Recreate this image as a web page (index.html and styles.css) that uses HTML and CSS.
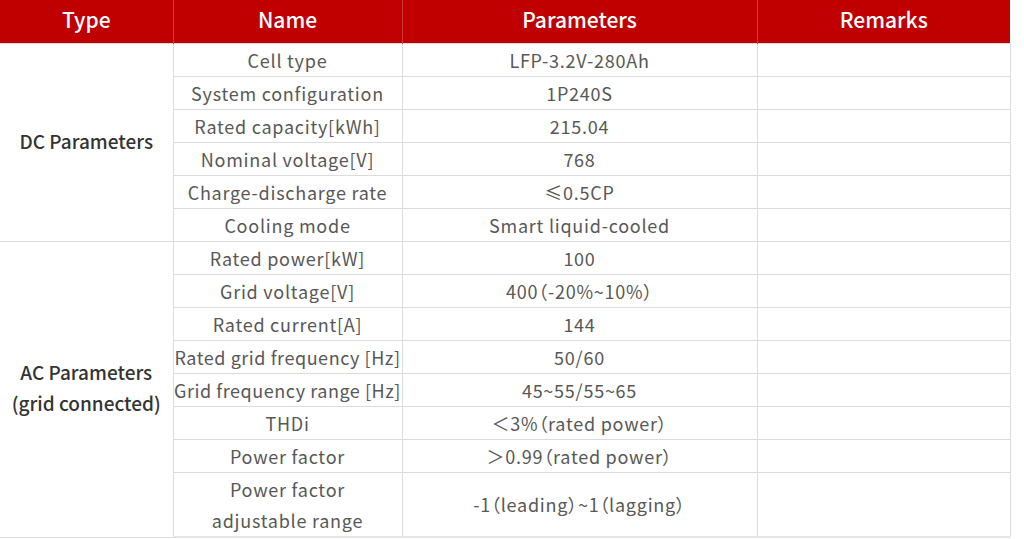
FILE: index.html
```html
<!DOCTYPE html>
<html>
<head>
<meta charset="utf-8">
<link rel="stylesheet" href="styles.css">
</head>
<body>
<table class="spec">
  <colgroup>
    <col class="c1"><col class="c2"><col class="c3"><col class="c4">
  </colgroup>
  <thead>
    <tr><th>Type</th><th>Name</th><th>Parameters</th><th>Remarks</th></tr>
  </thead>
  <tbody>
    <tr><td class="type" rowspan="6">DC Parameters</td><td>Cell type</td><td>LFP-3.2V-280Ah</td><td></td></tr>
    <tr><td>System configuration</td><td>1P240S</td><td></td></tr>
    <tr><td>Rated capacity[kWh]</td><td>215.04</td><td></td></tr>
    <tr><td>Nominal voltage[V]</td><td>768</td><td></td></tr>
    <tr><td>Charge-discharge rate</td><td>≤0.5CP</td><td></td></tr>
    <tr><td>Cooling mode</td><td>Smart liquid-cooled</td><td></td></tr>
    <tr><td class="type" rowspan="8">AC Parameters<br>(grid connected)</td><td>Rated power[kW]</td><td>100</td><td></td></tr>
    <tr><td>Grid voltage[V]</td><td>400（-20%~10%）</td><td></td></tr>
    <tr><td>Rated current[A]</td><td>144</td><td></td></tr>
    <tr><td class="tight">Rated grid frequency [Hz]</td><td>50/60</td><td></td></tr>
    <tr><td class="tight">Grid frequency range [Hz]</td><td>45~55/55~65</td><td></td></tr>
    <tr><td>THDi</td><td>＜3%（rated power）</td><td></td></tr>
    <tr><td>Power factor</td><td>＞0.99（rated power）</td><td></td></tr>
    <tr class="tall"><td>Power factor<br>adjustable range</td><td>-1（leading）~1（lagging）</td><td></td></tr>
  </tbody>
</table>
</body>
</html>
```
FILE: styles.css
```css
html, body {
  margin: 0;
  padding: 0;
  background: #ffffff;
}
body {
  font-family: "Noto Sans CJK SC", "Noto Sans", sans-serif;
}
.spec {
  border-collapse: collapse;
  width: 1010px;
  table-layout: fixed;
}
.c1 { width: 173px; }
.c2 { width: 229px; }
.c3 { width: 355px; }
.c4 { width: 253px; }
.spec th {
  background: #c00000;
  color: #ffffff;
  font-weight: 500;
  font-size: 21px;
  height: 43px;
  padding: 0 0 4px 0;
  border-left: 1px solid #d43a3a;
  line-height: 39px;
  box-sizing: border-box;
}
.spec th:first-child { border-left: none; }
.spec td {
  border: 1px solid #dcdcdc;
  color: #585858;
  font-size: 18px;
  font-weight: 400;
  text-align: center;
  padding: 0;
  height: 32px;
  line-height: 32px;
  letter-spacing: 0.75px;
  font-feature-settings: "palt";
  white-space: nowrap;
}
.spec td.tight { letter-spacing: 0.55px; }
.spec tr td:first-child { border-left: none; }
.spec tr td:last-child { border-right: 1px solid #dcdcdc; }
.spec td.type {
  color: #333333;
  font-weight: 500;
  font-size: 19px;
  line-height: 31px;
  letter-spacing: 0;
  padding-bottom: 5px;
}
.spec tr.tall td {
  height: 63px;
  line-height: 31px;
  border-bottom: 2px solid #e6e6e6;
}
```
